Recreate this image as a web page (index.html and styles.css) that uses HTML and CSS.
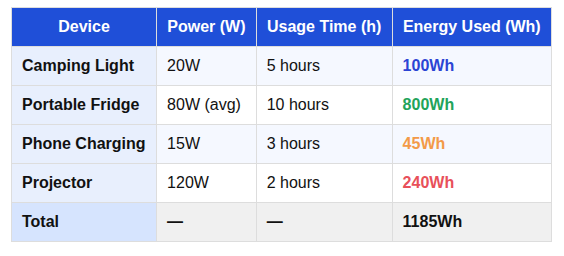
FILE: index.html
```html
<!DOCTYPE html>
<html>
<head>
<meta charset="utf-8">
<link rel="stylesheet" href="styles.css">
</head>
<body>
<div class="wrap">
<table class="energy">
  <thead>
    <tr><th>Device</th><th>Power (W)</th><th>Usage Time (h)</th><th>Energy Used (Wh)</th></tr>
  </thead>
  <tbody>
    <tr class="odd"><td class="dev">Camping Light</td><td>20W</td><td>5 hours</td><td class="en blue">100Wh</td></tr>
    <tr><td class="dev">Portable Fridge</td><td>80W (avg)</td><td>10 hours</td><td class="en green">800Wh</td></tr>
    <tr class="odd"><td class="dev">Phone Charging</td><td>15W</td><td>3 hours</td><td class="en orange">45Wh</td></tr>
    <tr><td class="dev">Projector</td><td>120W</td><td>2 hours</td><td class="en red">240Wh</td></tr>
    <tr class="total"><td class="dev">Total</td><td>—</td><td>—</td><td>1185Wh</td></tr>
  </tbody>
</table>
</div>
</body>
</html>
```
FILE: styles.css
```css
html, body { margin: 0; padding: 0; background: #fff; }
.wrap { padding: 7px 0 0 11px; }
.energy {
  border-collapse: collapse;
  width: 541px;
  font-family: "Liberation Sans", Arial, sans-serif;
  font-size: 16px;
  color: #111;
}
.energy th, .energy td {
  border: 1px solid #dddddd;
  padding: 10px;
  text-align: left;
  white-space: nowrap;
  line-height: 18px;
}
.energy th {
  background: #1f4fd8;
  color: #fff;
  font-weight: bold;
  text-align: center;
  border-color: #dddddd;
}
.energy tr.odd td { background: #f5f8ff; }
.energy td.dev { background: #e8effd; font-weight: bold; }
.energy tr.odd td.dev { background: #e8effd; }
.energy td.en { font-weight: bold; }
.blue { color: #2b44d4; }
.green { color: #22a35a; }
.orange { color: #f39a48; }
.red { color: #e8505a; }
.energy tr.total td { background: #f0f0f0; font-weight: bold; }
.energy tr.total td.dev { background: #d6e4fe; }
```
